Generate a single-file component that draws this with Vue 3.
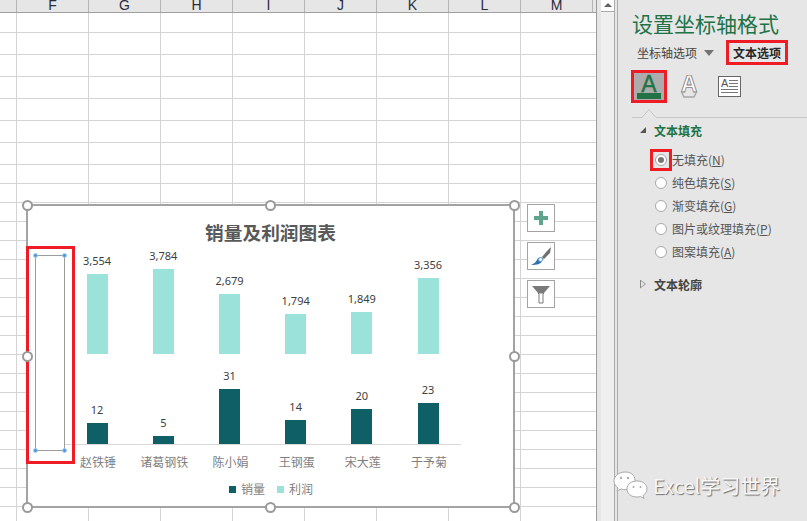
<template>
  <div class="window">
    <section class="sheet">
      <div class="col-head">
        <span class="corner"></span>
        <span v-for="col in columns" :key="col" class="col-name">{{ col }}</span>
      </div>
      <div class="grid">
        <div v-for="(h, i) in rowHeights" :key="i" class="row" :style="{ height: h + 'px' }"></div>
      </div>

      <div class="chart">
        <h2 class="chart-title">销量及利润图表</h2>
        <div class="plot">
          <div v-for="p in people" :key="p.name" class="plot-col">
            <div class="band band-top">
              <span class="value">{{ p.profit }}</span>
              <i class="bar bar-profit" :style="{ height: p.profitH + 'px' }"></i>
            </div>
            <div class="band band-bottom">
              <span class="value">{{ p.sales }}</span>
              <i class="bar bar-sales" :style="{ height: p.salesH + 'px' }"></i>
            </div>
          </div>
        </div>
        <div class="cats">
          <span v-for="p in people" :key="p.name" class="cat">{{ p.name }}</span>
        </div>
        <div class="legend">
          <span class="legend-item"><i class="swatch bar-sales"></i>销量</span>
          <span class="legend-item"><i class="swatch bar-profit"></i>利润</span>
        </div>

        <div class="axis-mark"></div>
        <div class="axis-select">
          <i class="dot dot-tl"></i><i class="dot dot-tr"></i>
          <i class="dot dot-bl"></i><i class="dot dot-br"></i>
        </div>
        <i v-for="h in handles" :key="h" class="handle" :class="h"></i>
      </div>

      <div class="chart-tools">
        <button class="tool">
          <svg viewBox="0 0 16 16" width="16" height="16">
            <path d="M6 1h4v5h5v4h-5v5H6v-5H1V6h5z" fill="#5fa58d" />
          </svg>
        </button>
        <button class="tool">
          <svg viewBox="0 0 24 24" width="24" height="24">
            <path d="M22 3l-1 6-6 6-2-2 5-6z" fill="#6f6f6f" />
            <path d="M13 13l2 2-1 1-2-2z" fill="#9a9a9a" />
            <path d="M9 14c2-1 4 0 4 3-1 3-5 4-11 4 3-1 5-3 7-7z" fill="#2f6fb5" />
            <circle cx="11.500" cy="15.500" r="2" fill="#fff" stroke="#5b9bd5" />
          </svg>
        </button>
        <button class="tool">
          <svg viewBox="0 0 20 20" width="20" height="20">
            <path d="M1 2h18l-6 7H7z" fill="#7a7a7a" />
            <path d="M7 9h6l-1 1v9H8v-9z" fill="#fff" stroke="#7a7a7a" />
          </svg>
        </button>
      </div>
    </section>

    <div class="scrollbar">
      <div class="scroll-up"><i></i></div>
    </div>

    <aside class="panel">
      <h1 class="panel-title">设置坐标轴格式</h1>
      <div class="tabs">
        <span class="tab">坐标轴选项</span>
        <i class="tab-caret"></i>
        <span class="tab tab-active">文本选项</span>
      </div>
      <div class="icons">
        <div class="icon-box">
          <svg viewBox="0 0 30 27" width="30" height="27">
            <text x="15" y="19" text-anchor="middle" class="icon-a">A</text>
            <rect x="3" y="20" width="24" height="6" fill="#217346" />
          </svg>
        </div>
        <svg class="icon-outline" viewBox="0 0 20 24" width="20" height="24">
          <text x="10" y="17" text-anchor="middle" class="icon-a-line">A</text>
          <path d="M3 18l2 4h10l2-4" fill="none" stroke="#a8a8a8" stroke-width="1.500" />
        </svg>
        <svg class="icon-text" viewBox="0 0 23 21" width="23" height="21">
          <rect x="0.500" y="0.500" width="22" height="20" fill="#fff" stroke="#666" />
          <text x="3" y="11" class="icon-a-small">A</text>
          <path d="M11 4.500h9M11 7.500h9M11 10.500h9M3 13.500h17M3 16.500h17" stroke="#777" />
        </svg>
      </div>
      <svg class="notch" viewBox="0 0 176 10" width="176" height="10">
        <path d="M1 9.500h10l7-8 7 8h151" fill="none" stroke="#c6c6c6" />
      </svg>

      <div class="group-head">
        <i class="arrow-open"></i>
        <span class="group-name group-on">文本填充</span>
      </div>
      <div class="options">
        <label v-for="o in fills" :key="o.key" class="option">
          <span class="radio" :class="{ 'radio-on': o.on }"></span>
          <span>{{ o.text }}(<u>{{ o.key }}</u>)</span>
        </label>
      </div>
      <div class="group-head group-closed">
        <i class="arrow-closed"></i>
        <span class="group-name">文本轮廓</span>
      </div>
    </aside>

    <div class="watermark">
      <svg viewBox="0 0 36 30" width="36" height="30">
        <path d="M12 1C6 1 1 5 1 10c0 3 1.500 5 4 7l-1 3 4-2c1.500 .5 3 .7 5 .6 3 0 9-3 9-9C22 4 18 1 12 1z" fill="#fff" stroke="#ababab" />
        <path d="M24 10c-6 0-10 3.500-10 8s4 8 10 8c1.300 0 2.500-.2 3.500-.5l3.500 2-1-3c2.500-1.500 4-4 4-6.500 0-4.500-4-8-10-8z" fill="#fff" stroke="#ababab" />
        <circle cx="8" cy="7" r="1.200" fill="#aaa" />
        <circle cx="15" cy="7" r="1.200" fill="#aaa" />
        <circle cx="20.500" cy="16" r="1" fill="#aaa" />
        <circle cx="27.500" cy="16" r="1" fill="#aaa" />
      </svg>
      <span class="watermark-text">Excel学习世界</span>
    </div>
  </div>
</template>

<script setup>
const columns = ['F', 'G', 'H', 'I', 'J', 'K', 'L', 'M'];

const rowHeights = [20, 22, 22, 22, 22, 22, 22, ...Array(19).fill(19)];

const people = [
  { name: '赵铁锤', profit: '3,554', profitH: 80, sales: 12, salesH: 21 },
  { name: '诸葛钢铁', profit: '3,784', profitH: 85, sales: 5, salesH: 8 },
  { name: '陈小娟', profit: '2,679', profitH: 60, sales: 31, salesH: 55 },
  { name: '王钢蛋', profit: '1,794', profitH: 40, sales: 14, salesH: 24 },
  { name: '宋大莲', profit: '1,849', profitH: 42, sales: 20, salesH: 35 },
  { name: '于予菊', profit: '3,356', profitH: 76, sales: 23, salesH: 41 },
];

const handles = ['h-tl', 'h-tc', 'h-tr', 'h-ml', 'h-mr', 'h-bl', 'h-bc', 'h-br'];

const fills = [
  { text: '无填充', key: 'N', on: true },
  { text: '纯色填充', key: 'S' },
  { text: '渐变填充', key: 'G' },
  { text: '图片或纹理填充', key: 'P' },
  { text: '图案填充', key: 'A' },
];
</script>

<style>
html,
body {
  margin: 0;
  background: #fff;
}
</style>

<style scoped>
.window {
  position: relative;
  display: flex;
  width: 807px;
  height: 521px;
  overflow: hidden;
  font-family: "Noto Sans CJK SC", "Noto Sans", sans-serif;
  background: #e6e6e6;
}

.sheet {
  position: relative;
  width: 597px;
  flex: none;
  box-sizing: border-box;
  border-right: 1px solid #9c9c9c;
  background: #fff;
}

.col-head {
  display: flex;
  height: 13px;
  box-sizing: border-box;
  overflow: hidden;
  background: #e6e6e6;
  border-bottom: 1px solid #9f9f9f;
}

.corner {
  width: 16px;
  flex: none;
  border-right: 1px solid #b5b5b5;
}

.col-name {
  width: 71px;
  flex: none;
  border-right: 1px solid #b5b5b5;
  text-align: center;
  font: 14px/11px "Liberation Sans", sans-serif;
  color: #2b2b3a;
}

.grid {
  height: 508px;
  overflow: hidden;
  background-image: repeating-linear-gradient(to right, transparent 0 71px, #d4d4d4 71px 72px);
  background-position: -55px 0;
}

.row {
  box-sizing: border-box;
  border-bottom: 1px solid #d4d4d4;
}

.chart {
  position: absolute;
  left: 26px;
  top: 204px;
  width: 489px;
  height: 304px;
  box-sizing: border-box;
  border: 2px solid #a3a3a3;
  background: #fff;
}

.chart-title {
  margin: 14px 0 0;
  font-size: 18.700px;
  line-height: 24px;
  font-weight: 700;
  text-align: center;
  color: #595959;
}

.plot {
  display: grid;
  grid-template-columns: repeat(6, 66.2px);
  width: 397px;
  margin-left: 36px;
  border-bottom: 1px solid #d9d9d9;
}

.plot-col {
  display: flex;
  flex-direction: column;
}

.band {
  display: flex;
  flex-direction: column;
  align-items: center;
  justify-content: flex-end;
}

.band-top {
  height: 110px;
}

.band-bottom {
  height: 90px;
}

.value {
  margin-bottom: 6px;
  font: 11px/14px "Noto Sans", sans-serif;
  color: #404040;
}

.bar {
  display: block;
  width: 21px;
}

.bar-profit {
  background: #9be3da;
}

.bar-sales {
  background: #0f5f66;
}

.cats {
  display: grid;
  grid-template-columns: repeat(6, 66.2px);
  margin: 8px 0 0 37px;
}

.cat {
  text-align: center;
  font-size: 12px;
  line-height: 18px;
  color: #7f7f7f;
}

.legend {
  display: flex;
  justify-content: center;
  gap: 12px;
  margin-top: 9px;
  padding-left: 1px;
  font-size: 12px;
  line-height: 18px;
  color: #7f7f7f;
}

.legend-item {
  display: flex;
  align-items: center;
  gap: 5px;
}

.swatch {
  width: 7px;
  height: 7px;
}

.axis-mark {
  position: absolute;
  left: -2px;
  top: 40px;
  width: 49px;
  height: 218px;
  box-sizing: border-box;
  border: 3px solid #ee1c25;
}

.axis-select {
  position: absolute;
  left: 7px;
  top: 49px;
  width: 30px;
  height: 196px;
  box-sizing: border-box;
  border: 1px solid #9c9c9c;
}

.dot {
  position: absolute;
  width: 5px;
  height: 5px;
  box-sizing: border-box;
  border-radius: 50%;
  background: #4a98e0;
  border: 1px solid #a5cdf0;
}

.dot-tl {
  left: -3px;
  top: -3px;
}

.dot-tr {
  right: -3px;
  top: -3px;
}

.dot-bl {
  left: -3px;
  bottom: -3px;
}

.dot-br {
  right: -3px;
  bottom: -3px;
}

.handle {
  position: absolute;
  width: 11px;
  height: 11px;
  box-sizing: border-box;
  margin: -5.500px 0 0 -5.500px;
  border-radius: 50%;
  border: 2px solid #9a9a9a;
  background: #fff;
}

.h-tl {
  left: -1px;
  top: -1px;
}

.h-tc {
  left: 242px;
  top: -1px;
}

.h-tr {
  left: 486px;
  top: -1px;
}

.h-ml {
  left: -1px;
  top: 150px;
}

.h-mr {
  left: 486px;
  top: 150px;
}

.h-bl {
  left: -1px;
  top: 301px;
}

.h-bc {
  left: 242px;
  top: 301px;
}

.h-br {
  left: 486px;
  top: 301px;
}

.chart-tools {
  position: absolute;
  left: 527px;
  top: 204px;
  display: flex;
  flex-direction: column;
  gap: 10px;
}

.tool {
  display: flex;
  align-items: center;
  justify-content: center;
  width: 28px;
  height: 28px;
  padding: 0;
  box-sizing: border-box;
  border: 1px solid #a3a3a3;
  background: #fff;
}

.scrollbar {
  width: 13px;
  flex: none;
  margin-left: 4px;
  background: #efefef;
  border-right: 1px solid #ababab;
}

.scroll-up {
  display: flex;
  justify-content: center;
  height: 10px;
  padding-top: 1px;
  background: #fff;
  border-bottom: 1px solid #ababab;
  box-sizing: content-box;
}

.scroll-up i {
  width: 0;
  height: 0;
  margin-top: 2px;
  border: 4px solid transparent;
  border-top: 0;
  border-bottom: 4px solid #606060;
}

.panel {
  width: 190px;
  flex: none;
  margin-left: 2px;
  padding-left: 13px;
  box-sizing: border-box;
  border-left: 1px solid #ababab;
  background: #e6e6e6;
}

.panel-title {
  margin: 11px 0 0 1px;
  font-size: 21px;
  line-height: 24px;
  font-weight: 400;
  color: #217346;
  white-space: nowrap;
}

.tabs {
  display: flex;
  align-items: center;
  height: 25px;
  margin: 5px 0 0 6px;
  font-size: 12px;
  color: #444;
}

.tab-caret {
  width: 0;
  height: 0;
  margin: 0 12px 0 7px;
  border: 5px solid transparent;
  border-bottom: 0;
  border-top: 6px solid #737373;
}

.tab-active {
  display: flex;
  align-items: center;
  justify-content: center;
  width: 62px;
  height: 25px;
  box-sizing: border-box;
  border: 3px solid #ee1c25;
  font-weight: 700;
  color: #262626;
}

.icons {
  display: flex;
  align-items: center;
  height: 33px;
  margin-top: 5px;
}

.icon-box {
  display: flex;
  align-items: center;
  justify-content: center;
  width: 36px;
  height: 33px;
  box-sizing: border-box;
  border: 3px solid #ee1c25;
  background: #acacac;
}

.icon-a {
  font: 400 23px "Liberation Sans", sans-serif;
  fill: #217346;
  stroke: #217346;
  stroke-width: 0.400px;
}

.icon-a-line {
  font: 700 23px "Liberation Sans", sans-serif;
  fill: #fff;
  stroke: #7c7c7c;
  stroke-width: 0.800px;
}

.icon-a-small {
  font: 11px "Liberation Sans", sans-serif;
  fill: #555;
}

.icon-outline {
  margin-left: 12px;
}

.icon-text {
  margin-left: 19px;
}

.notch {
  display: block;
  margin-top: 5px;
}

.group-head {
  display: flex;
  align-items: center;
  height: 24px;
  padding-left: 9px;
}

.group-closed {
  margin-top: 9px;
}

.group-name {
  margin-left: 8px;
  font-size: 12px;
  font-weight: 700;
  color: #444;
}

.group-on {
  color: #217346;
}

.arrow-open {
  width: 0;
  height: 0;
  border-left: 6px solid transparent;
  border-bottom: 6px solid #555;
}

.arrow-closed {
  width: 6px;
  height: 9px;
  background: #8a8a8a;
  clip-path: polygon(0 0, 100% 50%, 0 100%, 0 0, 1px 18%, 1px 82%, 82% 50%, 1px 18%);
}

.options {
  display: flex;
  flex-direction: column;
  margin: 6px 0 0 24px;
}

.option {
  display: flex;
  align-items: center;
  gap: 5px;
  height: 23px;
  font-size: 12px;
  color: #555;
}

.option u {
  text-underline-offset: 1px;
}

.radio {
  position: relative;
  display: block;
  width: 12px;
  height: 12px;
  box-sizing: border-box;
  border: 1px solid #a8a8a8;
  border-radius: 50%;
  background: #fff;
}

.radio-on::before {
  content: "";
  position: absolute;
  left: 2px;
  top: 2px;
  width: 6px;
  height: 6px;
  border-radius: 50%;
  background: #777;
}

.radio-on::after {
  content: "";
  position: absolute;
  left: -6px;
  top: -6px;
  width: 22px;
  height: 22px;
  box-sizing: border-box;
  border: 3px solid #ee1c25;
}

.watermark {
  position: absolute;
  left: 613px;
  top: 471px;
  display: flex;
  align-items: center;
  gap: 4px;
}

.watermark-text {
  font-size: 20px;
  line-height: 30px;
  color: #f7f7f7;
  text-shadow: 1px 1px 1px #6f6f6f;
  white-space: nowrap;
}
</style>
